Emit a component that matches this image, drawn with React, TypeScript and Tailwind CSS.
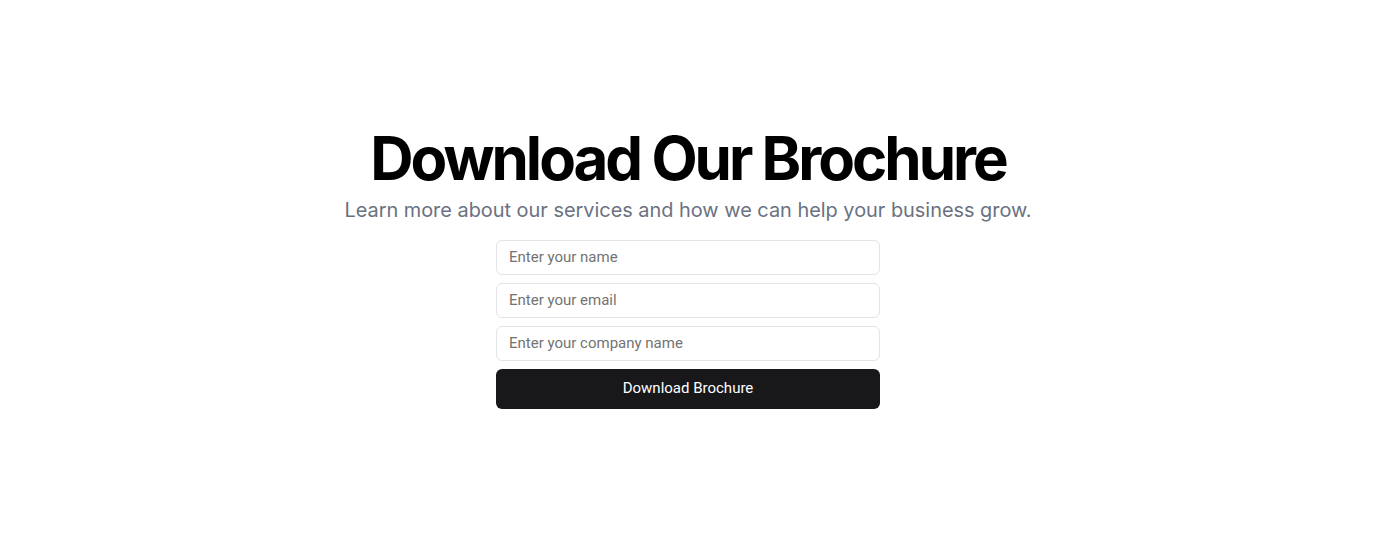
export default function App() {
  return (
    <main className="flex min-h-screen w-full items-center justify-center bg-white pb-[1px] font-['Inter',sans-serif]">
      <div className="flex flex-col items-center px-4 text-center">
        <h1 className="text-6xl font-bold tracking-tighter text-black">
          Download Our Brochure
        </h1>
        <p className="mt-2 text-[19.9px] leading-7 text-gray-500">
          Learn more about our services and how we can help your business grow.
        </p>
        <form className="mt-4 flex w-full max-w-sm flex-col gap-2 font-['Roboto',sans-serif]">
          <input
            type="text"
            placeholder="Enter your name"
            className="h-[35px] w-full rounded-md border border-zinc-200 bg-white px-3 text-[15px] text-zinc-900 placeholder:text-[#737373] focus:outline-none"
          />
          <input
            type="email"
            placeholder="Enter your email"
            className="h-[35px] w-full rounded-md border border-zinc-200 bg-white px-3 text-[15px] text-zinc-900 placeholder:text-[#737373] focus:outline-none"
          />
          <input
            type="text"
            placeholder="Enter your company name"
            className="h-[35px] w-full rounded-md border border-zinc-200 bg-white px-3 text-[15px] text-zinc-900 placeholder:text-[#737373] focus:outline-none"
          />
          <button
            type="submit"
            className="h-10 w-full rounded-md bg-[#18181b] text-[15px] font-normal text-white"
          >
            Download Brochure
          </button>
        </form>
      </div>
    </main>
  );
}
